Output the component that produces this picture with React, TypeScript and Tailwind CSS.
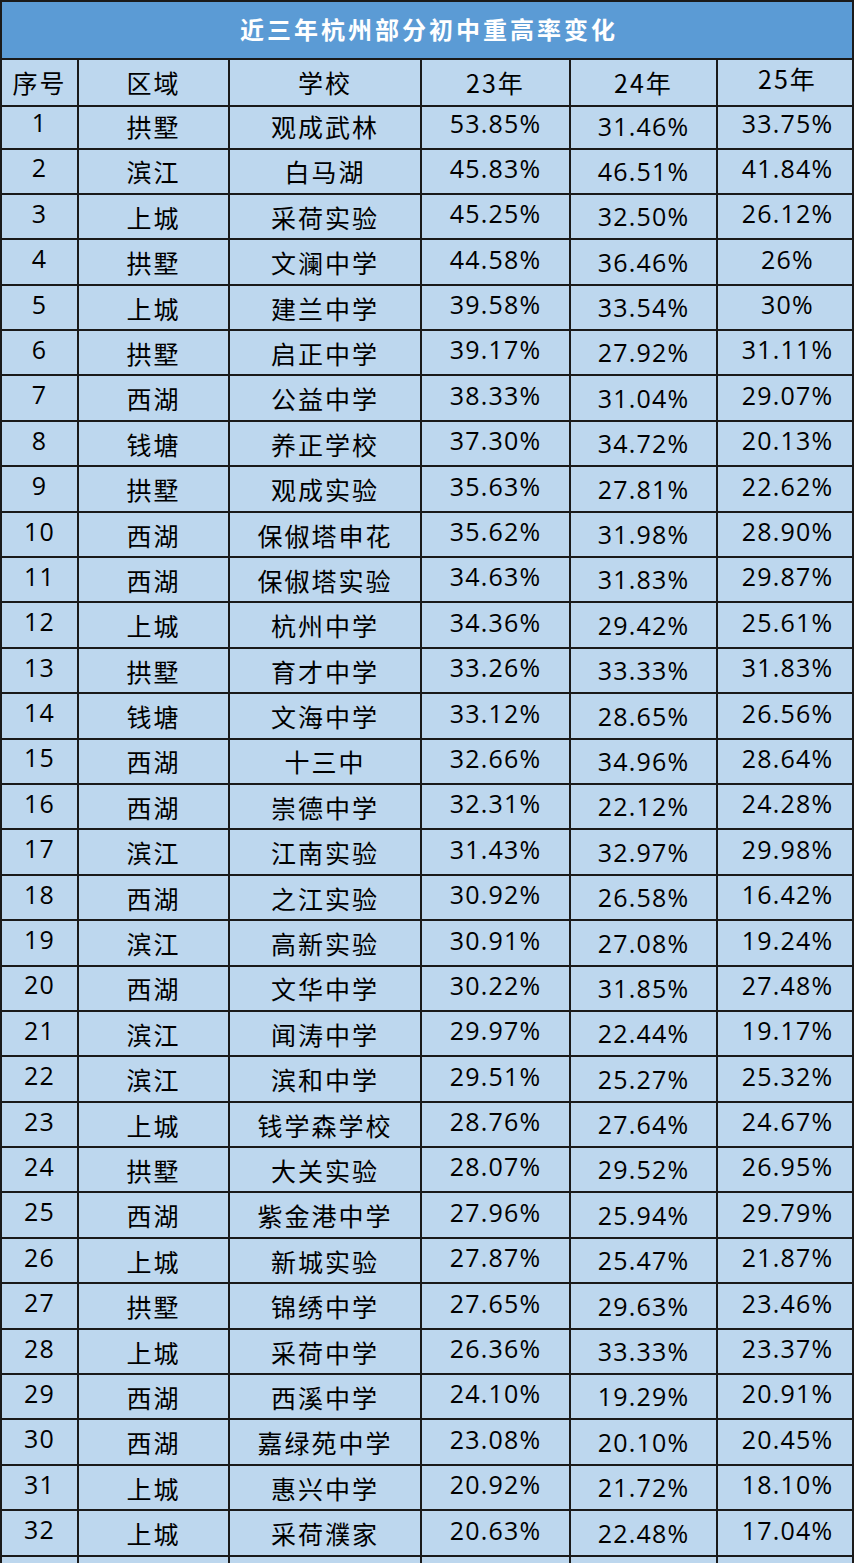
const rows: [number, string, string, string, string, string][] = [
  [1, "拱墅", "观成武林", "53.85%", "31.46%", "33.75%"],
  [2, "滨江", "白马湖", "45.83%", "46.51%", "41.84%"],
  [3, "上城", "采荷实验", "45.25%", "32.50%", "26.12%"],
  [4, "拱墅", "文澜中学", "44.58%", "36.46%", "26%"],
  [5, "上城", "建兰中学", "39.58%", "33.54%", "30%"],
  [6, "拱墅", "启正中学", "39.17%", "27.92%", "31.11%"],
  [7, "西湖", "公益中学", "38.33%", "31.04%", "29.07%"],
  [8, "钱塘", "养正学校", "37.30%", "34.72%", "20.13%"],
  [9, "拱墅", "观成实验", "35.63%", "27.81%", "22.62%"],
  [10, "西湖", "保俶塔申花", "35.62%", "31.98%", "28.90%"],
  [11, "西湖", "保俶塔实验", "34.63%", "31.83%", "29.87%"],
  [12, "上城", "杭州中学", "34.36%", "29.42%", "25.61%"],
  [13, "拱墅", "育才中学", "33.26%", "33.33%", "31.83%"],
  [14, "钱塘", "文海中学", "33.12%", "28.65%", "26.56%"],
  [15, "西湖", "十三中", "32.66%", "34.96%", "28.64%"],
  [16, "西湖", "崇德中学", "32.31%", "22.12%", "24.28%"],
  [17, "滨江", "江南实验", "31.43%", "32.97%", "29.98%"],
  [18, "西湖", "之江实验", "30.92%", "26.58%", "16.42%"],
  [19, "滨江", "高新实验", "30.91%", "27.08%", "19.24%"],
  [20, "西湖", "文华中学", "30.22%", "31.85%", "27.48%"],
  [21, "滨江", "闻涛中学", "29.97%", "22.44%", "19.17%"],
  [22, "滨江", "滨和中学", "29.51%", "25.27%", "25.32%"],
  [23, "上城", "钱学森学校", "28.76%", "27.64%", "24.67%"],
  [24, "拱墅", "大关实验", "28.07%", "29.52%", "26.95%"],
  [25, "西湖", "紫金港中学", "27.96%", "25.94%", "29.79%"],
  [26, "上城", "新城实验", "27.87%", "25.47%", "21.87%"],
  [27, "拱墅", "锦绣中学", "27.65%", "29.63%", "23.46%"],
  [28, "上城", "采荷中学", "26.36%", "33.33%", "23.37%"],
  [29, "西湖", "西溪中学", "24.10%", "19.29%", "20.91%"],
  [30, "西湖", "嘉绿苑中学", "23.08%", "20.10%", "20.45%"],
  [31, "上城", "惠兴中学", "20.92%", "21.72%", "18.10%"],
  [32, "上城", "采荷濮家", "20.63%", "22.48%", "17.04%"],
];

const cols = "grid grid-cols-[77px_151px_192px_149px_147px_139px]";
const cell = "flex justify-center border-r-2 border-b-2 border-[#1a1a1a] last:border-r-0 text-black";
const num = "font-['Open_Sans','Noto_Sans_CJK_SC',sans-serif] font-medium text-[25px] tracking-[1.2px]";
const cjk = "font-['Noto_Sans_CJK_SC',sans-serif] text-[25px] tracking-[2px]";

export default function App() {
  return (
    <div className="w-[854px] h-[1563px] overflow-hidden bg-[#bdd7ee]">
      <div className="border-l-2 border-r-2 border-t-2 border-[#1a1a1a]">
        <div className="h-[58px] bg-[#5b9bd5] border-b-2 border-[#1a1a1a] flex items-center justify-center pl-[4px] pb-[2px]">
          <span className="font-['Noto_Sans_CJK_SC',sans-serif] font-bold text-[24px] tracking-[3px] text-white">
            近三年杭州部分初中重高率变化
          </span>
        </div>
        <div className={`${cols} h-[44px]`}>
          <div className={`${cell} ${cjk} items-center`}>序号</div>
          <div className={`${cell} ${cjk} items-center`}>区域</div>
          <div className={`${cell} ${cjk} items-center`}>学校</div>
          <div className={`${cell} ${cjk} items-center`}>23年</div>
          <div className={`${cell} ${cjk} items-center`}>24年</div>
          <div className={`${cell} ${cjk} items-center pb-[7px]`}>25年</div>
        </div>
        {rows.map((r) => (
          <div key={r[0]} className={`${cols} h-[45.4px]`}>
            <div className={`${cell} ${num} items-center pb-[6px]`}>{r[0]}</div>
            <div className={`${cell} ${cjk} items-center pt-[2px]`}>{r[1]}</div>
            <div className={`${cell} ${cjk} items-center pt-[2px]`}>{r[2]}</div>
            <div className={`${cell} ${num} items-center pb-[5px]`}>{r[3]}</div>
            <div className={`${cell} ${num} items-center pt-[1px]`}>{r[4]}</div>
            <div className={`${cell} ${num} items-center pb-[5px]`}>{r[5]}</div>
          </div>
        ))}
        <div className={`${cols} h-[45.4px]`}>
          {[0, 1, 2, 3, 4, 5].map((i) => (
            <div key={i} className={cell}></div>
          ))}
        </div>
      </div>
    </div>
  );
}
